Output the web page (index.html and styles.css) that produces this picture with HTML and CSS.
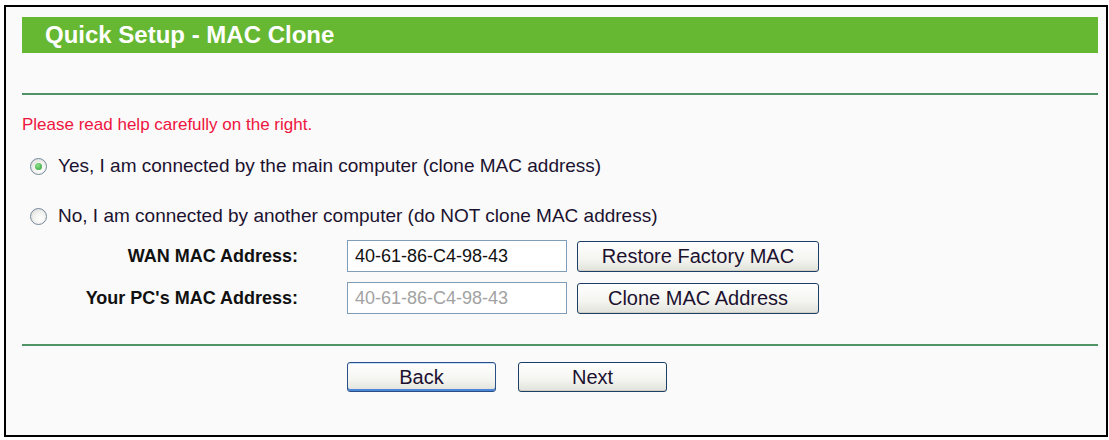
FILE: index.html
```html
<!DOCTYPE html>
<html lang="en">
<head>
  <meta charset="UTF-8">
  <meta name="viewport" content="width=device-width, initial-scale=1.0">
  <title>Quick Setup - MAC Clone</title>
  <link rel="stylesheet" href="styles.css">
</head>
<body>
  <main class="panel">
    <div class="panel-title">Quick Setup - MAC Clone</div>
    <div class="rule"></div>

    <p class="notice">Please read help carefully on the right.</p>

    <label class="choice">
      <span class="radio checked"></span>
      Yes, I am connected by the main computer (clone MAC address)
    </label>
    <label class="choice second">
      <span class="radio"></span>
      No, I am connected by another computer (do NOT clone MAC address)
    </label>

    <div class="mac-grid">
      <span class="mac-label">WAN MAC Address:</span>
      <input class="mac-input" type="text" value="40-61-86-C4-98-43">
      <button class="btn wide" type="button">Restore Factory MAC</button>

      <span class="mac-label">Your PC's MAC Address:</span>
      <input class="mac-input" type="text" value="40-61-86-C4-98-43" disabled>
      <button class="btn wide" type="button">Clone MAC Address</button>
    </div>

    <div class="rule bottom"></div>

    <div class="actions">
      <button class="btn nav default" type="button">Back</button>
      <button class="btn nav" type="button">Next</button>
    </div>
  </main>
</body>
</html>
```

FILE: styles.css
```css
* {
  margin: 0;
  padding: 0;
  box-sizing: border-box;
}

body {
  background: #fff;
  font-family: "Liberation Sans", Arial, sans-serif;
  font-size: 18px;
  color: #1a1a1a;
}

.panel {
  margin: 5px 1px 0 4px;
  height: 432px;
  border: 2px solid #000;
  background: #fafafa;
  padding: 10px 8px 0 16px;
}

.panel-title {
  height: 36px;
  line-height: 36px;
  padding-left: 23px;
  background: #66b832;
  color: #fff;
  font-size: 24px;
  font-weight: bold;
}

.rule {
  margin-top: 40px;
  height: 2px;
  background: #4f9467;
}

.rule.bottom {
  margin-top: 30px;
}

.notice {
  margin-top: 20px;
  line-height: 20px;
  font-size: 17px;
  color: #ee1440;
}

.choice {
  display: flex;
  align-items: center;
  gap: 11px;
  height: 30px;
  margin-top: 16px;
  padding-left: 8px;
  font-size: 19px;
  color: #1c1230;
}

.choice.second {
  margin-top: 20px;
}

.radio {
  flex: none;
  width: 17px;
  height: 17px;
  border-radius: 50%;
  border: 1px solid #74889a;
  background: radial-gradient(circle at 60% 65%, #fff 0, #f2f2f0 45%, #d6d6d2 100%);
  display: flex;
  align-items: center;
  justify-content: center;
}

.radio.checked::after {
  content: "";
  width: 7px;
  height: 7px;
  border-radius: 50%;
  background: radial-gradient(circle at 40% 35%, #8fe28a, #2a9a32);
}

.mac-grid {
  display: grid;
  grid-template-columns: 315px 220px 242px;
  column-gap: 10px;
  row-gap: 10px;
  align-items: center;
  margin-top: 9px;
}

.mac-label {
  justify-self: end;
  font-weight: bold;
  color: #111;
  margin-right: 39px;
}

.mac-input {
  height: 32px;
  border: 1px solid #7f9db9;
  background: #fff;
  padding-left: 7px;
  font-family: inherit;
  font-size: 18px;
  color: #111;
}

.mac-input:disabled {
  color: #a2a2a2;
}

.btn {
  height: 31px;
  border: 1px solid #1d3f66;
  border-radius: 3px;
  background: linear-gradient(#ffffff, #f4f4f0 60%, #e2e2dc);
  font-family: inherit;
  font-size: 20px;
  color: #1c1230;
  box-shadow: inset 0 -1px 0 #d0cfc6;
}

.btn.nav {
  width: 149px;
  height: 30px;
}

.btn.default {
  border-color: #2a4f86;
  box-shadow: inset 0 1px 0 #cde0fa, inset 0 -2px 0 #4b86d8;
}

.actions {
  display: flex;
  gap: 22px;
  margin-top: 16px;
  padding-left: 325px;
}
```
